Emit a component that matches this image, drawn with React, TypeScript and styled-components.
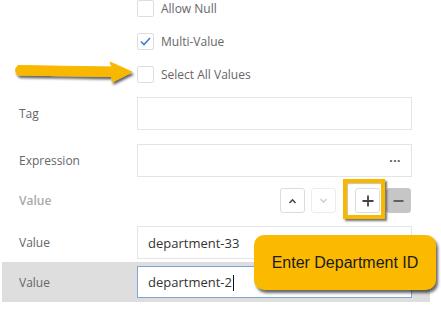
import React from 'react';
import styled, { createGlobalStyle } from 'styled-components';

const GlobalStyle = createGlobalStyle`
    body {
        margin: 0;
        background: #ffffff;
        font-family: "Open Sans", "Noto Sans", Arial, sans-serif;
    }
`

const Page = styled.div`
    position: relative;
    width: 441px;
    height: 313px;
    overflow: hidden;
    background: #fff;
`

const Panel = styled.div`
    width: 428px;
    margin-left: 2px;
    display: flex;
    flex-direction: column;
`

const CheckList = styled.div`
    display: flex;
    flex-direction: column;
    gap: 16px;
    padding-left: 135px;
`

const CheckItem = styled.label`
    display: flex;
    align-items: center;
    gap: 7px;
    height: 17px;
    font-size: 12px;
    color: #666;
`

const Box = styled.span`
    width: 17px;
    height: 17px;
    box-sizing: border-box;
    border: 1px solid #dedede;
    border-radius: 2px;
    background: #fff;
    display: flex;
    align-items: center;
    justify-content: center;
`

const Row = styled.div<{ $top?: number; $shaded?: boolean }>`
    display: grid;
    grid-template-columns: 135px 275px;
    align-items: center;
    margin-top: ${p => p.$top ?? 0}px;
    padding: ${p => (p.$shaded ? '4px 0' : '0')};
    background: ${p => (p.$shaded ? '#dedede' : 'transparent')};
`

const Label = styled.span<{ $head?: boolean }>`
    padding-left: 17px;
    font-size: 12px;
    color: ${p => (p.$head ? '#a9a9a9' : '#666')};
    font-weight: ${p => (p.$head ? 600 : 400)};
`

const Field = styled.div<{ $focus?: boolean }>`
    height: ${p => (p.$focus ? 32 : 33)}px;
    box-sizing: border-box;
    border: 1px solid ${p => (p.$focus ? '#7ea6d3' : '#e4e4e4')};
    background: #fff;
    display: flex;
    align-items: center;
    justify-content: space-between;
    padding: 0 10px 0 10px;
    font-size: 13px;
    color: #333;
`

const Dots = styled.span`
    font-size: 12px;
    font-weight: 700;
    color: #555;
    letter-spacing: 0.5px;
    margin-top: -6px;
`

const Caret = styled.span`
    display: inline-block;
    width: 1px;
    height: 16px;
    background: #111;
    vertical-align: middle;
    margin-left: 1px;
`

const Tools = styled.div`
    display: flex;
    justify-content: flex-end;
    align-items: center;
    gap: 6px;
    padding-right: 1px;
`

const ToolBtn = styled.button<{ $faint?: boolean; $fill?: boolean }>`
    width: 25px;
    height: 25px;
    box-sizing: border-box;
    padding: 0;
    border: 1px solid ${p => (p.$fill ? '#c6c6c6' : p.$faint ? '#ececec' : '#dcdcdc')};
    border-radius: 3px;
    background: ${p => (p.$fill ? '#c6c6c6' : '#fff')};
    display: flex;
    align-items: center;
    justify-content: center;
`

const Highlight = styled.span`
    position: relative;
    display: flex;
    margin-left: 13px;

    &::after {
        content: '';
        position: absolute;
        left: -12px;
        right: -5px;
        top: -9px;
        bottom: -6px;
        border: 4px solid #f9b800;
        box-shadow: 2px 2px 2px rgba(0, 0, 0, 0.55), inset 1px 1px 1px rgba(0, 0, 0, 0.25);
        pointer-events: none;
    }
`

const Callout = styled.div`
    position: absolute;
    left: 254px;
    top: 235px;
    width: 182px;
    height: 55px;
    box-sizing: border-box;
    background: #fbba00;
    border-radius: 10px;
    box-shadow: 2px 3px 3px rgba(0, 0, 0, 0.6);
    display: flex;
    align-items: center;
    justify-content: center;
    font-family: "Liberation Sans", Arial, sans-serif;
    font-size: 16px;
    color: #1a1a1a;
`

const Arrow = styled.svg`
    position: absolute;
    left: 10px;
    top: 55px;
    overflow: visible;
`

const Check = () => (
    <svg width="11" height="9" viewBox="0 0 11 9">
        <path d="M1 4.5 L4 7.5 L10 1" fill="none" stroke="#3a7fd5" strokeWidth="1.6" />
    </svg>
)

const Chevron = ({ up, color }: { up?: boolean; color: string }) => (
    <svg width="9" height="6" viewBox="0 0 9 6">
        <path d={up ? 'M1.5 5 L4.5 1.8 L7.5 5' : 'M1.5 1 L4.5 4.2 L7.5 1'} fill="none" stroke={color} strokeWidth="1.5" />
    </svg>
)

const Plus = () => (
    <svg width="12" height="12" viewBox="0 0 12 12">
        <path d="M6 0.5 V11.5 M0.5 6 H11.5" stroke="#444" strokeWidth="1.8" />
    </svg>
)

const Minus = () => (
    <svg width="11" height="4" viewBox="0 0 11 4">
        <path d="M0.5 2 H10.5" stroke="#555" strokeWidth="1.8" />
    </svg>
)

export default function App() {
    return (
        <Page>
            <GlobalStyle />
            <Panel>
                <CheckList>
                    <CheckItem><Box />Allow Null</CheckItem>
                    <CheckItem><Box><Check /></Box>Multi-Value</CheckItem>
                    <CheckItem><Box />Select All Values</CheckItem>
                </CheckList>

                <Row $top={14}>
                    <Label>Tag</Label>
                    <Field />
                </Row>
                <Row $top={14}>
                    <Label>Expression</Label>
                    <Field><span /><Dots>...</Dots></Field>
                </Row>
                <Row $top={11}>
                    <Label $head>Value</Label>
                    <Tools>
                        <ToolBtn><Chevron up color="#444" /></ToolBtn>
                        <ToolBtn $faint><Chevron color="#cfcfcf" /></ToolBtn>
                        <Highlight>
                            <ToolBtn><Plus /></ToolBtn>
                        </Highlight>
                        <ToolBtn $fill><Minus /></ToolBtn>
                    </Tools>
                </Row>
                <Row $top={13}>
                    <Label>Value</Label>
                    <Field><span>department-33</span></Field>
                </Row>
                <Row $top={3} $shaded>
                    <Label>Value</Label>
                    <Field $focus><span>department-2<Caret /></span></Field>
                </Row>
            </Panel>

            <Arrow width="125" height="30" viewBox="0 0 125 30">
                <defs>
                    <filter id="arrowShadow" x="-10%" y="-40%" width="130%" height="200%">
                        <feDropShadow dx="1.5" dy="2.5" stdDeviation="1.2" floodColor="#000" floodOpacity="0.6" />
                    </filter>
                </defs>
                <path
                    d="M8 10.5 L102 12 L100 7 L122 17 L102 27 L102 21.5 L8 20 Q3 15.25 8 10.5 Z"
                    fill="#f9b800"
                    stroke="#f9b800"
                    strokeWidth="1"
                    strokeLinejoin="round"
                    filter="url(#arrowShadow)"
                />
            </Arrow>

            <Callout>Enter Department ID</Callout>
        </Page>
    );
}
